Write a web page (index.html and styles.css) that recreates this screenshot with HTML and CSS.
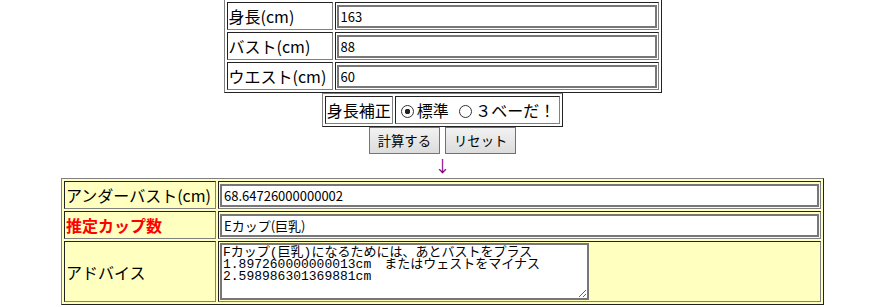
FILE: index.html
```html
<!DOCTYPE html>
<html lang="ja">
<head>
    <meta charset="UTF-8">
    <meta name="viewport" content="width=device-width, initial-scale=1.0">
    <title>カップ数計算</title>
    <link rel="stylesheet" href="styles.css">
</head>
<body>
    <form class="page">
        <table class="measure">
            <tr>
                <td class="label">身長(cm)</td>
                <td><input type="text" class="field" value="163"></td>
            </tr>
            <tr>
                <td class="label">バスト(cm)</td>
                <td><input type="text" class="field" value="88"></td>
            </tr>
            <tr>
                <td class="label">ウエスト(cm)</td>
                <td><input type="text" class="field" value="60"></td>
            </tr>
        </table>

        <table class="correction">
            <tr>
                <td>身長補正</td>
                <td>
                    <label class="choice"><input type="radio" name="hosei" checked>標準</label>
                    <label class="choice"><input type="radio" name="hosei">３ベーだ！</label>
                </td>
            </tr>
        </table>

        <div class="actions">
            <button type="button" class="btn is-default">計算する</button>
            <button type="reset" class="btn">リセット</button>
        </div>

        <div class="arrow">↓</div>

        <table class="result">
            <tr>
                <td class="label">アンダーバスト(cm)</td>
                <td><input type="text" class="field wide" value="68.64726000000002"></td>
            </tr>
            <tr>
                <td class="label strong">推定カップ数</td>
                <td><input type="text" class="field wide" value="Eカップ(巨乳)"></td>
            </tr>
            <tr>
                <td class="label">アドバイス</td>
                <td><textarea class="advice">Fカップ(巨乳)になるためには、あとバストをプラス
1.897260000000013cm　またはウェストをマイナス
2.598986301369881cm</textarea></td>
            </tr>
        </table>
    </form>
</body>
</html>
```

FILE: styles.css
```css
body {
    margin: 0;
    font-family: "Noto Sans CJK JP", sans-serif;
    font-size: 16px;
    color: #000;
    background-color: #fff;
}

.page {
    padding-left: 10px;
    text-align: center;
    margin-top: -1px;
}

table {
    margin: 0 auto;
    border-collapse: separate;
    border-spacing: 2px;
    border: 1px solid;
    border-color: #808080 #222 #222 #808080;
    text-align: left;
}

td {
    height: 24px;
    padding: 1px;
    border: 1px solid;
    border-color: #222 #808080 #808080 #222;
    line-height: 24px;
    white-space: nowrap;
    vertical-align: middle;
}

.measure .label {
    width: 102px;
}

.field {
    display: block;
    box-sizing: border-box;
    width: 320px;
    height: 23px;
    margin: 0;
    padding: 1px 2px;
    border: 2px solid #777;
    font-family: "Noto Sans CJK JP", sans-serif;
    font-size: 13px;
}

.field.wide {
    width: 599px;
}

/* 身長補正 */
.choice {
    margin-right: 3px;
}

.choice input {
    appearance: none;
    -webkit-appearance: none;
    box-sizing: border-box;
    width: 13px;
    height: 13px;
    margin: 0 3px 0 4px;
    border: 1px solid #333;
    border-radius: 50%;
    background-color: #fff;
    vertical-align: -1px;
}

.choice input:checked {
    background: radial-gradient(circle, #222 0 2.5px, #fff 3px);
}

.actions {
    display: flex;
    justify-content: center;
    gap: 5px;
}

.btn {
    box-sizing: border-box;
    height: 27px;
    padding: 0 8px;
    border: 1px solid #707070;
    background: linear-gradient(#f2f2f2, #dcdcdc);
    font-family: "Noto Sans CJK JP", sans-serif;
    font-size: 13.33px;
    color: #000;
}

.btn.is-default {
    border-color: #3c7fd6;
}

.arrow {
    height: 24px;
    line-height: 22px;
    color: #800080;
    text-align: center;
}

/* 結果 */
.result {
    width: 763px;
    background-color: #ffffc0;
}

.result .label {
    width: 150px;
}

.strong {
    color: #ff0000;
    font-weight: bold;
}

.advice {
    display: block;
    box-sizing: border-box;
    width: 369px;
    height: 57px;
    margin: 0;
    padding: 2px 1px 0;
    border: 2px solid #777;
    font-family: "Liberation Mono", "Noto Sans CJK JP", monospace;
    font-size: 13px;
    line-height: 12px;
    resize: both;
}
```
